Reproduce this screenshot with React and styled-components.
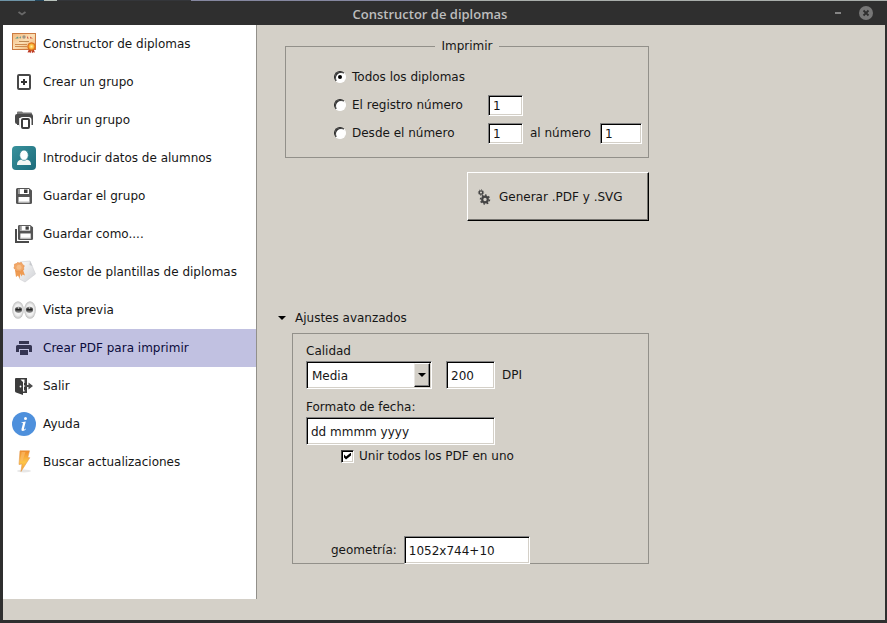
import React, { useState } from "react";
import styled, { createGlobalStyle } from "styled-components";

const FACE = "#d4d0c8";
const FRAME = "#2f2f2f";
const LINE = "#92908a";

const GlobalStyle = createGlobalStyle`
  * { box-sizing: border-box; }
  body {
    margin: 0;
    background: ${FRAME};
    color: #161616;
    font: 12px/14px "DejaVu Sans", sans-serif;
  }
  button, input, select { font: inherit; color: inherit; margin: 0; }
`;

const Window = styled.div`
  display: flex;
  flex-direction: column;
  min-height: 100vh;
  padding: 0 2px 3px 3px;
  background: ${FRAME};
`;

const TitleBar = styled.header`
  display: grid;
  grid-template-columns: 1fr auto 1fr;
  align-items: center;
  height: 25px;
  margin: 0 -2px 0 -3px;
  padding: 2px 14px 0 15px;
  color: #bdbdbd;
  background:
    linear-gradient(90deg, #6d93a6 0 35px, #24485e 35px 44px, #b9c3bd 44px 57px, #34363a 57px 191px, #8587a0 191px 420px, #a9aeab 420px) top / 100% 1px no-repeat,
    ${FRAME};
`;

const Title = styled.h1`
  margin: 0;
  padding-right: 28px;
  font: 600 13px/18px "Open Sans", sans-serif;
`;

const TitleButton = styled.button`
  display: flex;
  padding: 0;
  border: 0;
  background: none;
`;

const TitleActions = styled.div`
  display: flex;
  justify-content: flex-end;
  align-items: center;
  gap: 16px;
`;

const Body = styled.div`
  display: flex;
  flex: 1;
  background: ${FACE};
`;

const Sidebar = styled.nav`
  flex: 0 0 254px;
  margin-bottom: 21px;
  background: #fff;
  border-right: 1px solid ${LINE};
`;

const NavItem = styled.button`
  display: flex;
  align-items: center;
  gap: 7px;
  width: 100%;
  height: 38px;
  padding: 0 9px;
  border: 0;
  text-align: left;
  white-space: nowrap;
  color: ${(p) => (p.$active ? "#0c0c3c" : "#161616")};
  background: ${(p) => (p.$active ? "#c1c1e1" : "#fff")};
`;

const Main = styled.main`
  flex: 1;
  display: flex;
  flex-direction: column;
  max-width: 392px;
  padding: 13px 0 0 28px;
`;

const PrintGroup = styled.fieldset`
  display: flex;
  flex-direction: column;
  margin: 0;
  min-width: 0;
  padding: 9px 6px 10px;
  border: 1px solid ${LINE};
`;

const Legend = styled.legend`
  margin: 0 auto;
  padding: 0 6px;
  line-height: 16px;
`;

const OptionRow = styled.div`
  display: grid;
  grid-template-columns: 154px 35px 1fr 42px;
  align-items: center;
  height: 28px;
  padding-left: 0;
  margin-left: 42px;
`;

const Option = styled.label`
  display: flex;
  align-items: center;
  gap: 6px;
  white-space: nowrap;
`;

const Radio = styled.input`
  appearance: none;
  display: grid;
  place-items: center;
  width: 12px;
  height: 12px;
  border: 1px solid;
  border-color: #222 #fff #fff #222;
  border-radius: 50%;
  background: #fff;
  box-shadow: inset 1px 1px #333;
  &:checked::before {
    content: "";
    width: 4px;
    height: 4px;
    border-radius: 50%;
    background: #000;
  }
`;

const EndLabel = styled.label`
  padding-left: 7px;
`;

const Entry = styled.input`
  width: ${(p) => p.$width || "100%"};
  height: ${(p) => (p.$tall ? "28px" : "21px")};
  min-width: 0;
  padding: 1px 4px 0;
  border: 1px solid;
  border-color: #828282 #fff #fff #828282;
  border-radius: 0;
  outline: 0;
  background: #fff;
  box-shadow: inset 1px 1px #000, inset -1px -1px ${FACE};
`;

const Generate = styled.button`
  display: flex;
  align-items: center;
  gap: 7px;
  align-self: flex-end;
  width: 182px;
  height: 49px;
  margin-top: 14px;
  padding: 0 8px;
  border: 1px solid;
  border-color: #fff #000 #000 #fff;
  background: ${FACE};
  box-shadow: inset -1px -1px #75736f;
`;

const Disclosure = styled.button`
  display: flex;
  align-items: center;
  align-self: flex-start;
  gap: 9px;
  margin: 90px 0 8px -7px;
  padding: 0;
  border: 0;
  background: none;
`;

const Advanced = styled.section`
  display: flex;
  flex-direction: column;
  align-items: flex-start;
  height: 231px;
  margin-left: 7px;
  padding: 10px 13px 0;
  border: 1px solid ${LINE};
`;

const FieldLabel = styled.label`
  display: block;
  margin-bottom: 3px;
`;

const QualityRow = styled.div`
  display: flex;
  align-items: center;
  margin-bottom: 11px;
`;

const Combo = styled.div`
  display: grid;
  grid-template-columns: 1fr 17px;
  width: 126px;
  height: 28px;
  margin-right: 14px;
  border: 1px solid;
  border-color: #828282 #fff #fff #828282;
  background: #fff;
  box-shadow: inset 1px 1px #000, inset -1px -1px ${FACE};
`;

const Select = styled.select`
  appearance: none;
  grid-area: 1 / 1 / 2 / 3;
  padding: 1px 4px 0 5px;
  border: 0;
  outline: 0;
  background: none;
`;

const ComboArrow = styled.span`
  grid-area: 1 / 2 / 2 / 3;
  display: grid;
  place-items: center;
  margin: 1px 1px 1px 0;
  border: 1px solid;
  border-color: #fff #000 #000 #e8e6e2;
  background: ${FACE};
  box-shadow: inset -1px -1px #828282;
  pointer-events: none;
`;

const Merge = styled.label`
  display: flex;
  align-items: center;
  gap: 5px;
  margin: 4px 0 0 35px;
`;

const Checkbox = styled.input`
  appearance: none;
  width: 13px;
  height: 13px;
  border: 1px solid;
  border-color: #444 #fff #fff #444;
  background: #fff;
  box-shadow: inset 1px 1px #000, inset -1px -1px ${FACE};
  &:checked::before {
    content: "";
    display: block;
    width: 7px;
    height: 7px;
    margin: 2px;
    background: #000;
    clip-path: polygon(0 29%, 29% 58%, 100% 0, 100% 43%, 29% 100%, 0 72%);
  }
`;

const Geometry = styled.div`
  display: flex;
  align-items: center;
  gap: 7px;
  margin: auto 0 -1px 25px;
`;

const Svg24 = ({ children }) => (
  <svg width="24" height="24" viewBox="0 0 24 24" aria-hidden="true">
    {children}
  </svg>
);

const DiplomaIcon = () => (
  <Svg24>
    <defs>
      <linearGradient id="paper" x1="0" y1="0" x2="1" y2="1">
        <stop offset="0" stopColor="#f2b87c" />
        <stop offset=".5" stopColor="#fbe0b6" />
        <stop offset="1" stopColor="#eba862" />
      </linearGradient>
      <radialGradient id="seal">
        <stop offset="0" stopColor="#fff3a0" />
        <stop offset=".6" stopColor="#f9b233" />
        <stop offset="1" stopColor="#dd6a18" />
      </radialGradient>
    </defs>
    <rect x=".5" y="1.5" width="23" height="16" fill="url(#paper)" stroke="#cc7b42" />
    <path d="M3 6.500l3-2 .5 2z" fill="#5c9c8c" />
    <path d="M7 6l2-2v2.500z" fill="#79a08e" />
    <circle cx="12" cy="5" r="1.700" fill="#a09684" />
    <path d="M15 4l2 2.500h-2zM18 4.500l3 2h-3z" fill="#d1614b" />
    <path d="M7 9.500h10" stroke="#bd8a55" />
    <path d="M3 12.500h12M3 14.500h12" stroke="#cf8c50" />
    <path d="M17.500 16l-2 4.500 2-.3 1 1 1.300-4.500zM21 16l2 4.500-1.800-.3-1.200 1-1-4.500z" fill="#bd3b25" />
    <circle cx="19.500" cy="14.500" r="3.800" fill="url(#seal)" stroke="#d96c1c" strokeWidth=".8" />
  </Svg24>
);

const NewGroupIcon = () => (
  <Svg24>
    <rect x="6" y="5" width="12" height="14" rx="1" fill="none" stroke="#484848" strokeWidth="2" />
    <path d="M12 9v6M9 12h6" stroke="#333" strokeWidth="2" />
  </Svg24>
);

const OpenGroupIcon = () => (
  <Svg24>
    <path d="M5 6V4.500Q5 3.500 6 3.500h4l1 1h8q1 0 1 1V7H5z" fill="#777" />
    <path d="M3 8q0-2 2-2h14q2 0 2 2v9h-1.500v-5q0-3-3-3H11q-4 0-4 4v4H5v-1q-2 0-2-2z" fill="#4a4a4a" />
    <rect x="10" y="11" width="7" height="9" rx="1" fill="#fff" stroke="#3d3d3d" strokeWidth="2" />
    <path d="M7.500 10v8.500" stroke="#ddd" />
  </Svg24>
);

const StudentIcon = () => (
  <Svg24>
    <defs>
      <linearGradient id="teal" x1="0" y1="0" x2="1" y2="1">
        <stop offset="0" stopColor="#38919c" />
        <stop offset="1" stopColor="#1d6c7b" />
      </linearGradient>
    </defs>
    <rect width="24" height="24" rx="4" fill="url(#teal)" />
    <path d="M5 19c0-4 2-5 4.500-5.500h5C17 14 19 15 19 19z" fill="#f4f7f5" />
    <ellipse cx="12" cy="9.200" rx="4.300" ry="5.200" fill="#fff" stroke="#287d8a" strokeWidth=".7" />
  </Svg24>
);

const Floppy = () => (
  <g>
    <path d="M1.500 0H13l3 2.500v12q0 1.500-1.500 1.500h-13Q0 16 0 14.500v-13Q0 0 1.500 0z" fill="#555" />
    <path d="M2 1h11v5H2z" fill="#fff" />
    <path d="M2 1h2v5H2z" fill="#999" />
    <path d="M8 1.500h3.500V5H8z" fill="#3c3c3c" />
    <path d="M2.500 9h11v5.500h-11z" fill="#fff" />
    <path d="M2.500 14h11" stroke="#bbb" />
  </g>
);

const SaveIcon = () => (
  <Svg24>
    <g transform="translate(4 4)">
      <Floppy />
    </g>
  </Svg24>
);

const SaveAsIcon = () => (
  <Svg24>
    <path d="M4 7v13h13" fill="none" stroke="#4a4a4a" strokeWidth="2" />
    <g transform="translate(6 3) scale(.94)">
      <Floppy />
    </g>
  </Svg24>
);

const TemplatesIcon = () => (
  <Svg24>
    <defs>
      <linearGradient id="sheet" x1="0" y1="0" x2="1" y2="1">
        <stop offset="0" stopColor="#fbfbfb" />
        <stop offset="1" stopColor="#d0d2d6" />
      </linearGradient>
    </defs>
    <path d="M8 2l10-1 5.500 13L13 22 7.500 19z" fill="url(#sheet)" stroke="#cfcfd1" strokeWidth=".6" />
    <path d="M18 1l-.5 4 3 1z" fill="#c7c9cd" />
    <path d="M3 10l1 7 2-1.500 1.500 3 1.500-8zM7 10l2.500 6.500 1-2 2.500 1-2.500-7z" fill="#ee9b52" />
    <path d="M5.500 2.500l2 .5 2-.5 1 2 1.800 1.200-.7 2 .2 2-2 .8-1.400 1.400-2-.7-2 .3-1-2-1.500-1.300.6-2-.1-2 2-.6z" fill="#f1a768" stroke="#e58c43" strokeWidth=".6" />
    <circle cx="7" cy="7.200" r="2.500" fill="#f6bd86" />
  </Svg24>
);

const EyesIcon = () => (
  <Svg24>
    <defs>
      <radialGradient id="eye">
        <stop offset="0" stopColor="#fff" />
        <stop offset=".65" stopColor="#eee" />
        <stop offset="1" stopColor="#bdbdbd" />
      </radialGradient>
    </defs>
    <ellipse cx="6" cy="12" rx="5.800" ry="8.800" fill="url(#eye)" />
    <ellipse cx="18" cy="12" rx="5.800" ry="8.800" fill="url(#eye)" />
    <ellipse cx="6.500" cy="11.800" rx="3.600" ry="3" fill="#777" />
    <ellipse cx="17.500" cy="11.800" rx="3.600" ry="3" fill="#777" />
    <path d="M3.500 11.500h6M14.500 11.500h6" stroke="#222" strokeWidth="2" />
    <circle cx="6.500" cy="10" r=".7" fill="#ddd" />
    <circle cx="17.500" cy="10" r=".7" fill="#ddd" />
  </Svg24>
);

const PrinterIcon = () => (
  <Svg24>
    <path d="M7 5h10v3H7zM5.500 9h13Q20 9 20 10.500V16h-3v-3H7v3H4v-5.500Q4 9 5.500 9zM8 14h8v5H8z" fill="#353552" />
  </Svg24>
);

const ExitIcon = () => (
  <Svg24>
    <path d="M4 4h11v15H11v2L4 18.500Q3 18 3 17V5q0-1 1-1z" fill="#3c3c3c" />
    <path d="M8.500 5.500H14V9h-2v2h5v2h-5v3h2v1.500h-3V8z" fill="#fff" />
    <path d="M12.500 11h4V8.500l4.500 3.500-4.500 3.500V13h-4z" fill="#4b4b4b" />
    <path d="M13.500 5v4M13.500 15v3.500" stroke="#444" strokeWidth="2" />
    <circle cx="8.500" cy="12.500" r=".9" fill="#fff" />
  </Svg24>
);

const InfoIcon = () => (
  <Svg24>
    <circle cx="12" cy="12" r="12" fill="#4e90dc" />
    <circle cx="13.500" cy="6.500" r="1.500" fill="#fff" />
    <path d="M9.500 10.200l4.300-.7-1.800 7q-.2 1 .6.900l1.200-.8.300.5q-1.600 2-3.400 2-1.700-.1-1.200-2l1.400-5.300q.2-.9-.5-1l-1-.1z" fill="#fff" />
  </Svg24>
);

const BoltIcon = () => (
  <Svg24>
    <defs>
      <linearGradient id="bolt" x1="0" y1="0" x2="0" y2="1">
        <stop offset="0" stopColor="#f08a28" />
        <stop offset=".55" stopColor="#fdc64a" />
        <stop offset="1" stopColor="#f59a2c" />
      </linearGradient>
    </defs>
    <ellipse cx="12" cy="21" rx="7" ry="1.500" fill="#e7e7e7" />
    <path d="M8 .8h9.500L15.800 7.500l2 .2L9 21.500l1-7.500-3 .5z" fill="url(#bolt)" stroke="#e39a50" strokeWidth=".6" />
    <path d="M9.500 2h4l-3 9-2.200.5z" fill="#fbbb67" opacity=".7" />
  </Svg24>
);

const GearShape = ({ cx, cy, r, width, teeth }) => (
  <g fill="none" stroke="#444">
    <circle cx={cx} cy={cy} r={r} strokeWidth={width} />
    <circle
      cx={cx}
      cy={cy}
      r={r + width * 0.75}
      strokeWidth={width * 0.7}
      pathLength={teeth * 2}
      strokeDasharray="1 1"
    />
  </g>
);

const GearsIcon = () => (
  <svg width="16" height="16" viewBox="0 0 16 16" aria-hidden="true">
    <GearShape cx={5} cy={3.5} r={1.7} width={1.3} teeth={8} />
    <GearShape cx={9} cy={10.5} r={2.8} width={2.2} teeth={8} />
  </svg>
);

const Triangle = () => (
  <svg width="8" height="4" viewBox="0 0 8 4" aria-hidden="true">
    <path d="M0 0h8L4 4z" fill="#000" />
  </svg>
);

const sections = [
  ["Constructor de diplomas", DiplomaIcon],
  ["Crear un grupo", NewGroupIcon],
  ["Abrir un grupo", OpenGroupIcon],
  ["Introducir datos de alumnos", StudentIcon],
  ["Guardar el grupo", SaveIcon],
  ["Guardar como....", SaveAsIcon],
  ["Gestor de plantillas de diplomas", TemplatesIcon],
  ["Vista previa", EyesIcon],
  ["Crear PDF para imprimir", PrinterIcon],
  ["Salir", ExitIcon],
  ["Ayuda", InfoIcon],
  ["Buscar actualizaciones", BoltIcon],
];

export default function App() {
  const [active, setActive] = useState("Crear PDF para imprimir");
  const [open, setOpen] = useState(true);

  return (
    <>
      <GlobalStyle />
      <Window>
        <TitleBar>
          <TitleButton aria-label="Menú">
            <svg width="14" height="8" viewBox="0 0 14 8">
              <path d="M3.500 2l3.500 2.500L10.500 2" fill="none" stroke="#696969" strokeWidth="1.800" />
            </svg>
          </TitleButton>
          <Title>Constructor de diplomas</Title>
          <TitleActions>
            <TitleButton aria-label="Minimizar">
              <svg width="6" height="4" viewBox="0 0 6 4">
                <path d="M0 1h6" stroke="#858585" strokeWidth="2" />
              </svg>
            </TitleButton>
            <TitleButton aria-label="Cerrar">
              <svg width="16" height="16" viewBox="0 0 16 16">
                <circle cx="9" cy="7" r="7" fill="#777" />
                <path d="M6.500 4.500l5 5M11.500 4.500l-5 5" stroke="#2f2f2f" strokeWidth="1.800" />
              </svg>
            </TitleButton>
          </TitleActions>
        </TitleBar>

        <Body>
          <Sidebar>
            {sections.map(([name, Icon]) => (
              <NavItem key={name} $active={name === active} onClick={() => setActive(name)}>
                <Icon />
                {name}
              </NavItem>
            ))}
          </Sidebar>

          <Main>
            <PrintGroup>
              <Legend>Imprimir</Legend>
              <OptionRow>
                <Option>
                  <Radio type="radio" name="range" defaultChecked />
                  Todos los diplomas
                </Option>
              </OptionRow>
              <OptionRow>
                <Option>
                  <Radio type="radio" name="range" />
                  El registro número
                </Option>
                <Entry aria-label="Registro número" defaultValue="1" />
              </OptionRow>
              <OptionRow>
                <Option>
                  <Radio type="radio" name="range" />
                  Desde el número
                </Option>
                <Entry aria-label="Desde el número" defaultValue="1" />
                <EndLabel htmlFor="last">al número</EndLabel>
                <Entry id="last" defaultValue="1" />
              </OptionRow>
            </PrintGroup>

            <Generate>
              <GearsIcon />
              Generar .PDF y .SVG
            </Generate>

            <Disclosure aria-expanded={open} onClick={() => setOpen(!open)}>
              <Triangle />
              Ajustes avanzados
            </Disclosure>

            {open && (
              <Advanced>
                <FieldLabel htmlFor="quality">Calidad</FieldLabel>
                <QualityRow>
                  <Combo>
                    <Select id="quality" defaultValue="Media">
                      <option>Baja</option>
                      <option>Media</option>
                      <option>Alta</option>
                    </Select>
                    <ComboArrow>
                      <Triangle />
                    </ComboArrow>
                  </Combo>
                  <Entry id="dpi" $tall $width="49px" defaultValue="200" />
                  <EndLabel htmlFor="dpi">DPI</EndLabel>
                </QualityRow>
                <FieldLabel htmlFor="date">Formato de fecha:</FieldLabel>
                <Entry id="date" $tall $width="189px" defaultValue="dd mmmm yyyy" />
                <Merge>
                  <Checkbox type="checkbox" defaultChecked />
                  Unir todos los PDF en uno
                </Merge>
                <Geometry>
                  <label htmlFor="geometry">geometría:</label>
                  <Entry id="geometry" $tall $width="126px" defaultValue="1052x744+10" />
                </Geometry>
              </Advanced>
            )}
          </Main>
        </Body>
      </Window>
    </>
  );
}
